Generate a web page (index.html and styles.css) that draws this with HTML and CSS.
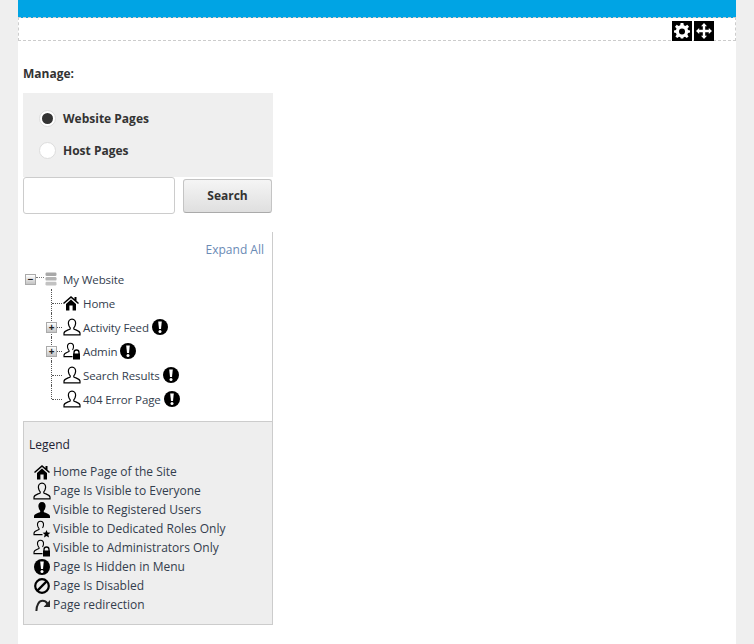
FILE: index.html
```html
<!DOCTYPE html>
<html lang="en">

<head>
    <meta charset="UTF-8">
    <meta name="viewport" content="width=device-width, initial-scale=1.0">
    <link rel="stylesheet" href="styles.css">
    <title>Manage Pages</title>
</head>

<body>
    <svg class="icon-defs" width="0" height="0">
        <symbol id="i-home" viewBox="0 0 16 16">
            <path d="M8 1 L11.5 4 V2 H13.5 V5.7 L16 8 L15 9 L8 3 L1 9 L0 8 Z M3 9 L8 4.6 L13 9 V15.5 H9.6 V10.5 H6.4 V15.5 H3 Z" fill="#000"/>
        </symbol>
        <symbol id="i-user" viewBox="0 0 18 18">
            <path d="M9 1.2 C6.4 1.2 5.2 3.2 5.4 5.6 C5.6 7.6 6.5 9 7.2 9.8 V11 C5 12.2 1 12.8 1 15.2 V16.8 H17 V15.2 C17 12.8 13 12.2 10.8 11 V9.8 C11.5 9 12.4 7.6 12.6 5.6 C12.8 3.2 11.6 1.2 9 1.2 Z" fill="none" stroke="#000" stroke-width="1.2"/>
        </symbol>
        <symbol id="i-user-solid" viewBox="0 0 18 18">
            <path d="M9 1 C6.4 1 5.2 3 5.4 5.6 C5.6 7.6 6.5 9 7.2 9.8 V11 C5 12.2 1 12.8 1 15.2 V17 H17 V15.2 C17 12.8 13 12.2 10.8 11 V9.8 C11.5 9 12.4 7.6 12.6 5.6 C12.8 3 11.6 1 9 1 Z" fill="#000"/>
        </symbol>
        <symbol id="i-user-lock" viewBox="0 0 18 18">
            <path d="M7.5 1.2 C5.3 1.2 4.3 2.9 4.5 5 C4.7 6.7 5.4 7.8 6 8.5 V9.6 C4.2 10.6 1 11.2 1 13.2 V14.6 H9.5 M7.5 1.2 C9.7 1.2 10.7 2.9 10.5 5 C10.4 6.2 10 7.2 9.5 7.9" fill="none" stroke="#000" stroke-width="1.1"/>
            <path d="M11 12 V10.5 A2.5 2.5 0 0 1 16 10.5 V12" fill="none" stroke="#000" stroke-width="1.3"/>
            <rect x="10" y="11.5" width="7" height="6" fill="#000"/>
        </symbol>
        <symbol id="i-user-star" viewBox="0 0 18 18">
            <path d="M7.5 1.2 C5.3 1.2 4.3 2.9 4.5 5 C4.7 6.7 5.4 7.8 6 8.5 V9.6 C4.2 10.6 1 11.2 1 13.2 V14.6 H9.5 M7.5 1.2 C9.7 1.2 10.7 2.9 10.5 5 C10.4 6.2 10 7.2 9.5 7.9" fill="none" stroke="#000" stroke-width="1.1"/>
            <path d="M13.5 10 L14.6 12.6 L17.4 12.8 L15.3 14.6 L16 17.4 L13.5 15.9 L11 17.4 L11.7 14.6 L9.6 12.8 L12.4 12.6 Z" fill="#000"/>
        </symbol>
        <symbol id="i-hidden" viewBox="0 0 16 16">
            <circle cx="8" cy="8" r="8" fill="#000"/>
            <path d="M6.2 2.6 H9.8 L9 10 H7 Z" fill="#fff"/>
            <circle cx="8" cy="12.4" r="1.5" fill="#fff"/>
        </symbol>
        <symbol id="i-disabled" viewBox="0 0 16 16">
            <circle cx="8" cy="8" r="6.8" fill="none" stroke="#000" stroke-width="2.2"/>
            <path d="M3.4 12.6 L12.6 3.4" stroke="#000" stroke-width="2.2"/>
        </symbol>
        <symbol id="i-redirect" viewBox="0 0 16 16">
            <path d="M2.4 14 C2.4 8 5 3.8 8.6 3.8 C10.8 3.8 12.4 5 13.4 6.6" fill="none" stroke="#222" stroke-width="2"/>
            <path d="M16 3 V10 H9.6 Z" fill="#222"/>
        </symbol>
        <symbol id="i-db" viewBox="0 0 12 14">
            <rect x="0.5" y="0.5" width="11" height="3.4" rx="1.2" fill="#a8a8a8"/>
            <rect x="0.5" y="5" width="11" height="3.6" rx="1.2" fill="#b4b4b4"/>
            <rect x="0.5" y="9.8" width="11" height="3.6" rx="1.2" fill="#c2c2c2"/>
        </symbol>
    </svg>

    <div class="page">
        <div class="top-bar"></div>
        <div class="action-pane">
            <span class="action-btn">
                <svg viewBox="0 0 20 20" width="20" height="20">
                    <rect width="20" height="20" fill="#000"/>
                    <path d="M8.6 2.5 H11.4 L11.8 4.7 L13.4 5.4 L15.3 4.2 L17 6.2 L15.5 7.9 L16 9.4 L18 10 V12 L16 12.6 L15.4 14.2 L16.6 16 L14.7 17.6 L13 16.3 L11.6 16.8 L11.2 18 H8.8 L8.4 16.8 L7 16.3 L5.3 17.6 L3.4 16 L4.6 14.2 L4 12.6 L2 12 V10 L4 9.4 L4.5 7.9 L3 6.2 L4.7 4.2 L6.6 5.4 L8.2 4.7 Z" fill="#fff" transform="translate(0 -0.5)"/>
                    <circle cx="10" cy="10.5" r="3" fill="#000"/>
                </svg>
            </span>
            <span class="action-btn">
                <svg viewBox="0 0 20 20" width="20" height="20">
                    <rect width="20" height="20" fill="#000"/>
                    <path d="M10 2 L13 5.2 H11.2 V8.8 H14.8 V7 L18 10 L14.8 13 V11.2 H11.2 V14.8 H13 L10 18 L7 14.8 H8.8 V11.2 H5.2 V13 L2 10 L5.2 7 V8.8 H8.8 V5.2 H7 Z" fill="#fff"/>
                </svg>
            </span>
        </div>

        <div class="manage">
            <h2 class="manage-title">Manage:</h2>

            <div class="scope-panel">
                <label class="radio-row">
                    <span class="radio radio-on"></span>
                    Website Pages
                </label>
                <label class="radio-row">
                    <span class="radio"></span>
                    Host Pages
                </label>
            </div>

            <div class="search-row">
                <input class="search-input" type="text">
                <button class="search-btn">Search</button>
            </div>

            <div class="tree-panel">
                <a class="expand-all">Expand All</a>
                <ul class="tree">
                    <li class="tree-row tree-root">
                        <span class="toggle">&minus;</span>
                        <svg class="db-icon" width="12" height="14"><use href="#i-db"/></svg>
                        <span>My Website</span>
                    </li>
                    <li class="tree-row tree-child">
                        <svg class="node-icon node-home" width="16" height="16"><use href="#i-home"/></svg>
                        <span>Home</span>
                    </li>
                    <li class="tree-row tree-child">
                        <span class="toggle">+</span>
                        <svg class="node-icon" width="18" height="18"><use href="#i-user"/></svg>
                        <span>Activity Feed</span>
                        <svg class="flag" width="16" height="16"><use href="#i-hidden"/></svg>
                    </li>
                    <li class="tree-row tree-child">
                        <span class="toggle">+</span>
                        <svg class="node-icon" width="18" height="18"><use href="#i-user-lock"/></svg>
                        <span>Admin</span>
                        <svg class="flag" width="16" height="16"><use href="#i-hidden"/></svg>
                    </li>
                    <li class="tree-row tree-child">
                        <svg class="node-icon" width="18" height="18"><use href="#i-user"/></svg>
                        <span>Search Results</span>
                        <svg class="flag" width="16" height="16"><use href="#i-hidden"/></svg>
                    </li>
                    <li class="tree-row tree-child tree-last">
                        <svg class="node-icon" width="18" height="18"><use href="#i-user"/></svg>
                        <span>404 Error Page</span>
                        <svg class="flag" width="16" height="16"><use href="#i-hidden"/></svg>
                    </li>
                </ul>
            </div>

            <div class="legend">
                <h3 class="legend-title">Legend</h3>
                <ul class="legend-list">
                    <li><svg class="legend-small" width="16" height="16"><use href="#i-home"/></svg>Home Page of the Site</li>
                    <li><svg width="18" height="18"><use href="#i-user"/></svg>Page Is Visible to Everyone</li>
                    <li><svg width="18" height="18"><use href="#i-user-solid"/></svg>Visible to Registered Users</li>
                    <li><svg width="18" height="18"><use href="#i-user-star"/></svg>Visible to Dedicated Roles Only</li>
                    <li><svg width="18" height="18"><use href="#i-user-lock"/></svg>Visible to Administrators Only</li>
                    <li><svg class="legend-small" width="16" height="16"><use href="#i-hidden"/></svg>Page Is Hidden in Menu</li>
                    <li><svg class="legend-small" width="16" height="16"><use href="#i-disabled"/></svg>Page Is Disabled</li>
                    <li><svg class="legend-small" width="16" height="16"><use href="#i-redirect"/></svg>Page redirection</li>
                </ul>
            </div>
        </div>
    </div>
</body>

</html>
```

FILE: styles.css
```css
html, body {
    margin: 0;
    padding: 0;
}

body {
    background-color: #efefef;
    font-family: "Open Sans", sans-serif;
    font-size: 12px;
    color: #333;
    height: 644px;
    overflow: hidden;
}

ul {
    list-style: none;
    margin: 0;
    padding: 0;
}

.icon-defs {
    position: absolute;
}

.page {
    width: 718px;
    height: 644px;
    margin-left: 18px;
    background-color: #fff;
}

.top-bar {
    height: 17px;
    background-color: #00a4e4;
}

/* the top dashes sit on the last row of the blue bar */
.action-pane {
    box-sizing: border-box;
    height: 24px;
    border: 1px dashed #ccc;
    background: linear-gradient(#00a4e4 1px, transparent 1px) border-box;
    display: flex;
    justify-content: flex-end;
    gap: 2px;
    padding: 3px 21px 0 0;
}

.action-btn {
    display: block;
    width: 20px;
    height: 20px;
}

.action-btn svg {
    display: block;
}

.manage {
    width: 250px;
    margin-left: 5px;
}

.manage-title {
    margin: 0;
    padding-top: 24px;
    height: 28px;
    line-height: 18px;
    font-size: 12px;
    font-weight: 700;
    color: #333;
}

.scope-panel {
    height: 84px;
    box-sizing: border-box;
    padding: 9px 0 0 16px;
    background-color: #efefef;
}

.radio-row {
    display: flex;
    align-items: center;
    gap: 7px;
    height: 32px;
    font-weight: 700;
    font-size: 12px;
    color: #333;
}

.radio {
    box-sizing: border-box;
    width: 17px;
    height: 17px;
    border-radius: 50%;
    border: 1px solid #ddd;
    background-color: #fff;
    display: flex;
    align-items: center;
    justify-content: center;
}

.radio-on::after {
    content: "";
    width: 11px;
    height: 11px;
    border-radius: 50%;
    background-color: #333;
}

.search-row {
    display: flex;
    align-items: flex-start;
    gap: 8px;
    height: 55px;
}

.search-input {
    box-sizing: border-box;
    width: 152px;
    height: 37px;
    margin: 0;
    border: 1px solid #ccc;
    border-radius: 3px;
    background-color: #fff;
}

.search-btn {
    box-sizing: border-box;
    width: 89px;
    height: 34px;
    margin: 2px 0 0;
    padding: 0 0 2px;
    border: 1px solid #c4c4c4;
    border-bottom-color: #aaa;
    border-radius: 3px;
    background: linear-gradient(#f5f5f5, #dfdfdf);
    font-family: "Open Sans", sans-serif;
    font-size: 12px;
    font-weight: 700;
    color: #333;
}

.tree-panel {
    box-sizing: border-box;
    height: 189px;
    border-right: 1px solid #ccc;
    padding-top: 9px;
}

.expand-all {
    display: block;
    height: 18px;
    line-height: 18px;
    padding-right: 8px;
    text-align: right;
    color: #6a8ab5;
}

.tree {
    margin-top: 8px;
}

.tree-row {
    position: relative;
    display: flex;
    align-items: center;
    height: 24px;
    font-size: 11.5px;
    letter-spacing: -0.1px;
    color: #333d4d;
    white-space: nowrap;
}

.tree-root {
    padding-left: 2px;
}

.tree-child {
    padding-left: 40px;
}

.node-icon {
    flex: none;
    margin-right: 2px;
}

.node-home {
    margin-right: 4px;
}

.flag {
    flex: none;
    margin-left: 3px;
}

.db-icon {
    flex: none;
    margin: 0 6px 0 9px;
}

.toggle {
    box-sizing: border-box;
    flex: none;
    width: 11px;
    height: 11px;
    border: 1px solid #aaa;
    background: linear-gradient(#fff, #c4c4c4);
    font-size: 10px;
    font-weight: 700;
    line-height: 8px;
    text-align: center;
    color: #222;
}

.tree-child .toggle {
    position: absolute;
    left: 23px;
    top: 7px;
    z-index: 1;
}

.tree-root::after {
    content: "";
    position: absolute;
    left: 13px;
    top: 10px;
    width: 8px;
    border-top: 1px dotted #777;
}

/* connector lines of the page tree */
.tree-child::before {
    content: "";
    position: absolute;
    left: 28px;
    top: -2px;
    height: 24px;
    border-left: 1px dotted #555;
}

.tree-child::after {
    content: "";
    position: absolute;
    left: 29px;
    top: 12px;
    width: 10px;
    border-top: 1px dotted #555;
}

.tree-last::before {
    height: 14px;
}

.legend {
    box-sizing: border-box;
    height: 204px;
    padding: 14px 5px 0;
    background-color: #eee;
    border: 1px solid #ccc;
}

.legend-title {
    margin: 0;
    font-size: 12px;
    line-height: 18px;
    font-weight: 400;
    color: #223;
}

.legend-list {
    margin-top: 8px;
    padding-left: 4px;
}

.legend-list li {
    display: flex;
    align-items: center;
    height: 19px;
    color: #333d4d;
    white-space: nowrap;
}

.legend-list svg {
    flex: none;
    margin-right: 2px;
}

.legend-list .legend-small {
    margin: 0 3px 0 1px;
}
```
